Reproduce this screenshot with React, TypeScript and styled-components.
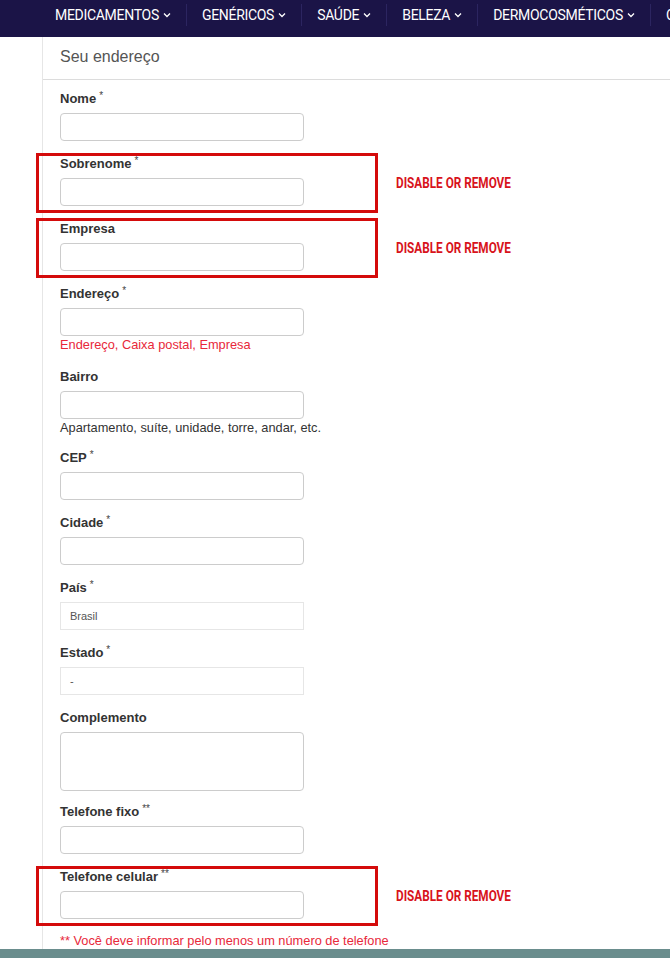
import React from 'react';
import styled, { createGlobalStyle } from 'styled-components';

const GlobalStyle = createGlobalStyle`
  html, body {
    margin: 0;
    padding: 0;
    background: #fff;
  }
  body {
    font-family: "Liberation Sans", Arial, sans-serif;
    color: #333;
  }
`;

const Page = styled.div`
  width: 670px;
  overflow: hidden;
`;

const NavBar = styled.nav`
  height: 37px;
  box-sizing: border-box;
  background: #1b1447;
  display: flex;
  align-items: flex-start;
  padding: 4px 0 0 40px;
  white-space: nowrap;
`;

const NavItem = styled.div`
  display: flex;
  align-items: center;
  gap: 4px;
  padding: 0 15px;
  height: 22px;
  color: #fff;
  font-family: "Roboto", "Liberation Sans", sans-serif;
  font-size: 14px;
  letter-spacing: -0.3px;
  & + & {
    border-left: 1px solid #2c2560;
  }
`;

const Chevron = () => (
  <svg width="8" height="6" viewBox="0 0 8 6" fill="none">
    <path d="M1 1.5 L4 4.5 L7 1.5" stroke="#fff" strokeWidth="1.3" />
  </svg>
);

const Main = styled.main`
  margin-left: 42px;
  border-left: 1px solid #e6e6e6;
`;

const Heading = styled.h3`
  margin: 0;
  padding: 9px 0 12px 17px;
  font-size: 16px;
  line-height: 21px;
  font-weight: normal;
  color: #555;
  border-bottom: 1px solid #dcdcdc;
`;

const Form = styled.form`
  padding: 10px 0 0 17px;
`;

const Group = styled.div<{ $gap?: number }>`
  position: relative;
  margin-bottom: ${(p) => (p.$gap ?? 14)}px;
`;

const Label = styled.label`
  display: block;
  font-size: 13px;
  line-height: 18px;
  font-weight: bold;
  color: #333;
  margin-bottom: 5px;
`;

const Req = styled.span`
  position: relative;
  top: -4px;
  font-weight: normal;
  font-size: 10px;
  line-height: 0;
  margin-left: 3px;
  color: #444;
`;

const Input = styled.input`
  display: block;
  box-sizing: border-box;
  width: 244px;
  height: 28px;
  border: 1px solid #cccccc;
  border-radius: 4px;
  background: #fff;
  margin: 0;
`;

const TextArea = styled.textarea`
  display: block;
  box-sizing: border-box;
  width: 244px;
  height: 59px;
  border: 1px solid #cccccc;
  border-radius: 4px;
  resize: none;
  margin: 0;
`;

const Select = styled.div`
  box-sizing: border-box;
  width: 244px;
  height: 28px;
  border: 1px solid #e6e6e6;
  padding-left: 9px;
  display: flex;
  align-items: center;
  font-size: 11px;
  color: #555;
`;

const Hint = styled.div<{ $error?: boolean }>`
  font-size: 12.8px;
  line-height: 18px;
  color: ${(p) => (p.$error ? '#e8283a' : '#333')};
`;

const Footnote = styled(Hint)`
  line-height: 16px;
`;

const Highlight = styled.div`
  position: absolute;
  top: -2px;
  left: -24px;
  width: 342px;
  height: 60px;
  box-sizing: border-box;
  border: 3px solid #d40b0b;
  pointer-events: none;
`;

const Note = styled.div`
  position: absolute;
  top: 19px;
  left: 357px;
  font-family: "Roboto", "Liberation Sans", sans-serif;
  font-weight: bold;
  font-size: 14px;
  line-height: 16px;
  color: #d8131b;
  white-space: nowrap;
  transform: scaleX(0.84);
  transform-origin: left center;
`;

const Footer = styled.footer`
  height: 12px;
  background: #6a8d8d;
`;

const nav = ['MEDICAMENTOS', 'GENÉRICOS', 'SAÚDE', 'BELEZA', 'DERMOCOSMÉTICOS', 'CUIDADOS'];

type Field = {
  label: string;
  req?: string;
  kind?: 'input' | 'select' | 'textarea';
  value?: string;
  hint?: string;
  error?: boolean;
  flagged?: boolean;
  gap?: number;
};

const fields: Field[] = [
  { label: 'Nome', req: '*' },
  { label: 'Sobrenome', req: '*', flagged: true },
  { label: 'Empresa', flagged: true },
  { label: 'Endereço', req: '*', hint: 'Endereço, Caixa postal, Empresa', error: true },
  { label: 'Bairro', hint: 'Apartamento, suíte, unidade, torre, andar, etc.', gap: 12 },
  { label: 'CEP', req: '*' },
  { label: 'Cidade', req: '*' },
  { label: 'País', req: '*', kind: 'select', value: 'Brasil' },
  { label: 'Estado', req: '*', kind: 'select', value: '-' },
  { label: 'Complemento', kind: 'textarea', gap: 12 },
  { label: 'Telefone fixo', req: '**' },
  { label: 'Telefone celular', req: '**', flagged: true },
];

export default function App() {
  return (
    <Page>
      <GlobalStyle />
      <NavBar>
        {nav.map((n) => (
          <NavItem key={n}>
            {n}
            <Chevron />
          </NavItem>
        ))}
      </NavBar>
      <Main>
        <Heading>Seu endereço</Heading>
        <Form>
          {fields.map((f) => (
            <Group key={f.label} $gap={f.gap}>
              <Label>
                {f.label}
                {f.req && <Req>{f.req}</Req>}
              </Label>
              {f.kind === 'select' ? (
                <Select>{f.value}</Select>
              ) : f.kind === 'textarea' ? (
                <TextArea />
              ) : (
                <Input type="text" />
              )}
              {f.hint && <Hint $error={f.error}>{f.hint}</Hint>}
              {f.flagged && (
                <Highlight>
                  <Note>DISABLE OR REMOVE</Note>
                </Highlight>
              )}
            </Group>
          ))}
          <Footnote $error>** Você deve informar pelo menos um número de telefone</Footnote>
        </Form>
      </Main>
      <Footer />
    </Page>
  );
}
